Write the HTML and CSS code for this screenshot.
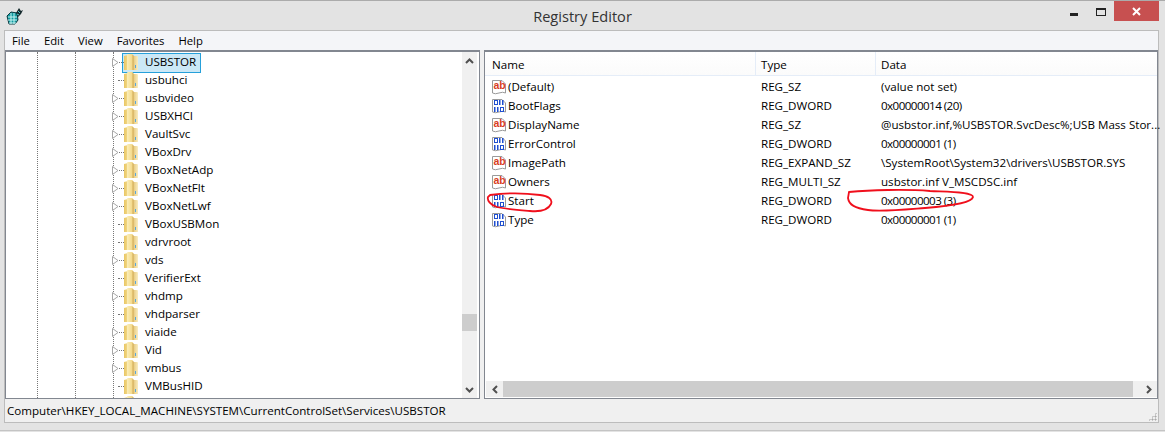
FILE: index.html
```html
<!DOCTYPE html>
<html>
<head>
<meta charset="utf-8">
<title>Registry Editor</title>
<link rel="stylesheet" href="styles.css">
</head>
<body>
<svg width="0" height="0" class="defs">
  <defs>
    <linearGradient id="fl" x1="0" y1="0" x2="1" y2="0">
      <stop offset="0" stop-color="#e9c764"/><stop offset="1" stop-color="#f3d98a"/>
    </linearGradient>
    <linearGradient id="fm" x1="0" y1="0" x2="1" y2="0">
      <stop offset="0" stop-color="#fbeeb8"/><stop offset="1" stop-color="#f2d684"/>
    </linearGradient>
    <linearGradient id="fr" x1="0" y1="0" x2="1" y2="0">
      <stop offset="0" stop-color="#e2be66"/><stop offset="1" stop-color="#f9edc2"/>
    </linearGradient>
  </defs>
  <symbol id="folder" viewBox="0 0 14 16">
    <path d="M0 2 L4 1 L4 16 L0 16 Z" fill="url(#fl)"/>
    <path d="M8 2 H13 Q14 2 14 3 V16 H8 Z" fill="url(#fr)"/>
    <path d="M3 1 Q3 0 4 0 H8 Q9 0 9 1 V16 H3 Z" fill="url(#fm)"/>
    <path d="M9 1 V16" stroke="#d0aa58" stroke-width="1" fill="none"/>
    <rect x="11" y="11" width="1" height="3" fill="#58a6dc"/>
  </symbol>
  <symbol id="twist" viewBox="0 0 7 9">
    <path d="M0.500 0.500 L6 4.500 L0.500 8.500 Z" fill="#fff" stroke="#a6a6a6" stroke-width="1"/>
  </symbol>
  <symbol id="page" viewBox="0 0 16 16">
    <path d="M1.500 1.500 H11 L14.500 5 V14 Q12 12.500 8 14 Q4 15.500 1.500 14 Z" fill="#fff" stroke="#9a9a9a"/>
  </symbol>
  <symbol id="dw" viewBox="0 0 16 16">
    <path d="M1.500 1.500 H11 L14.500 5 V14 Q12 12.500 8 14 Q4 15.500 1.500 14 Z" fill="#fff" stroke="#9a9a9a"/>
    <path d="M3 2 H7 V7 H3 Z M4 3 V6 H6 V3 Z M8 2 H9.500 V7 H8 Z M11 2 H12.500 V7 H11 Z M3 9 H4.500 V14 H3 Z M6 9 H7.500 V14 H6 Z M9 9 H13 V14 H9 Z M10 10 V13 H12 V10 Z" fill="#1f4fd0" fill-rule="evenodd"/>
  </symbol>
</svg>

<div class="window">
  <header class="titlebar">
    <svg class="appicon" width="18" height="18" viewBox="0 0 18 18">
      <path d="M1 9 L5 5 L11 6 L12 13 L9 17 L3 17 Z" fill="#0f9aa0" stroke="#0b3a40" stroke-width="1"/>
      <path d="M2 10 H11 M2 13 H11 M3 16 H10 M5 6 V17 M8 6 V17" stroke="#c8f4f2" stroke-width="1"/>
      <path d="M10 6 L13 1 L15 4 L17 3 L15 7 L12 10 Z" fill="#14292c"/>
      <path d="M12 4 L14 6 M11 7 L13 8" stroke="#57c8c8" stroke-width="1"/>
    </svg>
    <h1 class="title">Registry Editor</h1>
    <div class="controls">
      <span class="min"></span>
      <span class="max"></span>
      <span class="close">
        <svg width="9" height="9" viewBox="0 0 9 9"><path d="M1 1 L8 8 M8 1 L1 8" stroke="#fff" stroke-width="2"/></svg>
      </span>
    </div>
  </header>

  <div class="client">
    <nav class="menubar">
      <span>File</span><span>Edit</span><span>View</span><span>Favorites</span><span>Help</span>
    </nav>

    <main class="panes">
      <section class="tree">
        <div class="tree-body">
          <div class="guide guide-1"></div>
          <div class="guide guide-2"></div>
          <div class="guide guide-3"></div>
          <div class="row selected"><svg class="twist"><use href="#twist"/></svg><span class="stub"></span><svg class="folder"><use href="#folder"/></svg><span class="label">USBSTOR</span></div>
          <div class="row"><span class="twist none"></span><span class="stub long"></span><svg class="folder"><use href="#folder"/></svg><span class="label">usbuhci</span></div>
          <div class="row"><svg class="twist"><use href="#twist"/></svg><span class="stub"></span><svg class="folder"><use href="#folder"/></svg><span class="label">usbvideo</span></div>
          <div class="row"><svg class="twist"><use href="#twist"/></svg><span class="stub"></span><svg class="folder"><use href="#folder"/></svg><span class="label">USBXHCI</span></div>
          <div class="row"><svg class="twist"><use href="#twist"/></svg><span class="stub"></span><svg class="folder"><use href="#folder"/></svg><span class="label">VaultSvc</span></div>
          <div class="row"><svg class="twist"><use href="#twist"/></svg><span class="stub"></span><svg class="folder"><use href="#folder"/></svg><span class="label">VBoxDrv</span></div>
          <div class="row"><svg class="twist"><use href="#twist"/></svg><span class="stub"></span><svg class="folder"><use href="#folder"/></svg><span class="label">VBoxNetAdp</span></div>
          <div class="row"><svg class="twist"><use href="#twist"/></svg><span class="stub"></span><svg class="folder"><use href="#folder"/></svg><span class="label">VBoxNetFlt</span></div>
          <div class="row"><svg class="twist"><use href="#twist"/></svg><span class="stub"></span><svg class="folder"><use href="#folder"/></svg><span class="label">VBoxNetLwf</span></div>
          <div class="row"><span class="twist none"></span><span class="stub long"></span><svg class="folder"><use href="#folder"/></svg><span class="label">VBoxUSBMon</span></div>
          <div class="row"><span class="twist none"></span><span class="stub long"></span><svg class="folder"><use href="#folder"/></svg><span class="label">vdrvroot</span></div>
          <div class="row"><svg class="twist"><use href="#twist"/></svg><span class="stub"></span><svg class="folder"><use href="#folder"/></svg><span class="label">vds</span></div>
          <div class="row"><span class="twist none"></span><span class="stub long"></span><svg class="folder"><use href="#folder"/></svg><span class="label">VerifierExt</span></div>
          <div class="row"><svg class="twist"><use href="#twist"/></svg><span class="stub"></span><svg class="folder"><use href="#folder"/></svg><span class="label">vhdmp</span></div>
          <div class="row"><span class="twist none"></span><span class="stub long"></span><svg class="folder"><use href="#folder"/></svg><span class="label">vhdparser</span></div>
          <div class="row"><svg class="twist"><use href="#twist"/></svg><span class="stub"></span><svg class="folder"><use href="#folder"/></svg><span class="label">viaide</span></div>
          <div class="row"><svg class="twist"><use href="#twist"/></svg><span class="stub"></span><svg class="folder"><use href="#folder"/></svg><span class="label">Vid</span></div>
          <div class="row"><svg class="twist"><use href="#twist"/></svg><span class="stub"></span><svg class="folder"><use href="#folder"/></svg><span class="label">vmbus</span></div>
          <div class="row"><span class="twist none"></span><span class="stub long"></span><svg class="folder"><use href="#folder"/></svg><span class="label">VMBusHID</span></div>
          <div class="row"><span class="twist none"></span><span class="stub long"></span><svg class="folder"><use href="#folder"/></svg></div>
        </div>
        <div class="vscroll">
          <span class="sbtn"><svg width="9" height="6" viewBox="0 0 9 6"><path d="M1 5 L4.500 1.500 L8 5" fill="none" stroke="#505050" stroke-width="2"/></svg></span>
          <span class="vtrack"><span class="vthumb"></span></span>
          <span class="sbtn"><svg width="9" height="6" viewBox="0 0 9 6"><path d="M1 1 L4.500 4.500 L8 1" fill="none" stroke="#505050" stroke-width="2"/></svg></span>
        </div>
      </section>

      <section class="list">
        <div class="list-head">
          <span class="c-name">Name</span><span class="c-type">Type</span><span class="c-data">Data</span>
        </div>
        <div class="list-body">
          <div class="item"><span class="c-name"><svg class="vicon" viewBox="0 0 16 16"><use href="#page"/><text x="2.500" y="10" class="ab">ab</text></svg>(Default)</span><span class="c-type">REG_SZ</span><span class="c-data">(value not set)</span></div>
          <div class="item"><span class="c-name"><svg class="vicon"><use href="#dw"/></svg>BootFlags</span><span class="c-type">REG_DWORD</span><span class="c-data hex">0x00000014 (20)</span></div>
          <div class="item"><span class="c-name"><svg class="vicon" viewBox="0 0 16 16"><use href="#page"/><text x="2.500" y="10" class="ab">ab</text></svg>DisplayName</span><span class="c-type">REG_SZ</span><span class="c-data">@usbstor.inf,%USBSTOR.SvcDesc%;USB Mass Stor...</span></div>
          <div class="item"><span class="c-name"><svg class="vicon"><use href="#dw"/></svg>ErrorControl</span><span class="c-type">REG_DWORD</span><span class="c-data hex">0x00000001 (1)</span></div>
          <div class="item"><span class="c-name"><svg class="vicon" viewBox="0 0 16 16"><use href="#page"/><text x="2.500" y="10" class="ab">ab</text></svg>ImagePath</span><span class="c-type">REG_EXPAND_SZ</span><span class="c-data">\SystemRoot\System32\drivers\USBSTOR.SYS</span></div>
          <div class="item"><span class="c-name"><svg class="vicon" viewBox="0 0 16 16"><use href="#page"/><text x="2.500" y="10" class="ab">ab</text></svg>Owners</span><span class="c-type">REG_MULTI_SZ</span><span class="c-data">usbstor.inf V_MSCDSC.inf</span></div>
          <div class="item"><span class="c-name"><svg class="vicon"><use href="#dw"/></svg>Start</span><span class="c-type">REG_DWORD</span><span class="c-data hex">0x00000003 (3)</span></div>
          <div class="item"><span class="c-name"><svg class="vicon"><use href="#dw"/></svg>Type</span><span class="c-type">REG_DWORD</span><span class="c-data hex">0x00000001 (1)</span></div>
        </div>
        <div class="hscroll">
          <span class="hbtn"><svg width="6" height="9" viewBox="0 0 6 9"><path d="M5 1 L1.500 4.500 L5 8" fill="none" stroke="#505050" stroke-width="2"/></svg></span>
          <span class="hthumb"></span>
          <span class="hrest"></span>
          <span class="hbtn"><svg width="6" height="9" viewBox="0 0 6 9"><path d="M1 1 L4.500 4.500 L1 8" fill="none" stroke="#505050" stroke-width="2"/></svg></span>
        </div>
      </section>
    </main>

    <footer class="status">
      <span>Computer\HKEY_LOCAL_MACHINE\SYSTEM\CurrentControlSet\Services\USBSTOR</span>
      <span class="grip"></span>
    </footer>
  </div>
</div>

<svg class="marks" width="1165" height="432" viewBox="0 0 1165 432">
  <path d="M490 195 C505 193 525 193 540 195 C548 196 553 199 551 204 C548 210 540 212 530 211 C518 210 505 209 497 207 C490 205 487 200 488 197 Z" fill="none" stroke="#f00f1c" stroke-width="1.800"/>
  <path d="M849 192 C870 190 905 189 930 191 C950 192 973 192 973 197 C972 203 950 206 925 208 C900 210 880 212 868 210 C855 208 849 205 848 198 Z" fill="none" stroke="#f00f1c" stroke-width="1.800"/>
</svg>
</body>
</html>
```
FILE: styles.css
```css
* { box-sizing: border-box; }
html, body { margin: 0; padding: 0; }
body {
  width: 1165px;
  height: 432px;
  overflow: hidden;
  position: relative;
  font-family: "Open Sans", "Noto Sans", sans-serif;
  font-size: 11.6px;
  color: #000;
  background: #e3e3e3;
}
.defs { position: absolute; }
.ab { font: bold 10.500px "Liberation Sans", sans-serif; fill: #d8401f; }
.window {
  height: 431px;
  border-top: 1px solid #ababab;
  border-bottom: 1px solid #c4c4c4;
  display: flex;
  flex-direction: column;
}
.titlebar {
  height: 29px;
  display: flex;
  align-items: center;
  position: relative;
  padding-left: 6px;
  flex: none;
}
.appicon { display: block; margin-top: 1px; }
.title {
  position: absolute;
  left: 0;
  right: 0;
  margin: 0;
  text-align: center;
  font-size: 14.6px;
  font-weight: 400;
  color: #333;
}
.controls {
  position: absolute;
  right: 6px;
  top: 0;
  height: 20px;
  display: flex;
}
.min {
  width: 8px;
  height: 3px;
  background: #222;
  margin: 12px 0 0 0;
}
.max {
  width: 10px;
  height: 8px;
  border: 1px solid #222;
  border-top-width: 2px;
  margin: 7px 0 0 18px;
}
.close {
  width: 45px;
  height: 20px;
  background: #c75050;
  margin-left: 8px;
  display: flex;
  align-items: center;
  justify-content: center;
}
.close svg { display: block; }
.client {
  margin: 0 6px 0 4px;
  height: 393px;
  flex: none;
  border: 1px solid #bcbcbc;
  background: #f0f0f0;
  display: flex;
  flex-direction: column;
}
.menubar {
  height: 19px;
  flex: none;
  background: #f4f5f8;
  display: flex;
  padding-left: 7px;
  gap: 14px;
  align-items: center;
  font-size: 11.3px;
}
.panes {
  flex: none;
  height: 349px;
  display: flex;
  gap: 4px;
  background: #f0f0f0;
}
.tree {
  width: 475px;
  border: 1px solid #828790;
  border-top-width: 2px;
  display: flex;
  background: #fff;
  flex: none;
}
.tree-body {
  flex: 1;
  position: relative;
  overflow: hidden;
  padding-top: 1px;
}
.guide {
  position: absolute;
  top: 0;
  bottom: 0;
  border-left: 1px dotted #777;
}
.guide-1 { left: 31px; }
.guide-2 { left: 69px; }
.guide-3 { left: 107px; }
.row {
  height: 18px;
  display: flex;
  align-items: center;
  padding-left: 106px;
  position: relative;
  white-space: nowrap;
}
.twist {
  width: 7px;
  height: 9px;
  flex: none;
  display: block;
}
.twist.none { background: none; }
.stub {
  width: 5px;
  margin-left: 0;
  border-top: 1px dotted #777;
  flex: none;
}
.stub.long { width: 6px; margin-left: -1px; }
.folder { width: 14px; height: 16px; flex: none; display: block; }
.label { margin-left: 7px; margin-bottom: 2px; }
.row.selected::before {
  content: "";
  position: absolute;
  left: 116px;
  top: 0;
  width: 77px;
  height: 18px;
  background: #cbe8f6;
  border: 1px solid #26a0da;
}
.row.selected > * { position: relative; }
.vscroll {
  width: 15px;
  margin-right: 2px;
  flex: none;
  background: #f0f0f0;
  display: flex;
  flex-direction: column;
}
.sbtn {
  height: 17px;
  flex: none;
  display: flex;
  align-items: center;
  justify-content: center;
}
.vtrack {
  flex: 1;
  padding-top: 245px;
}
.vthumb {
  display: block;
  height: 17px;
  background: #cdcdcd;
}
.list {
  width: 674px;
  border: 1px solid #828790;
  border-top-width: 2px;
  background: #fff;
  display: flex;
  flex-direction: column;
  flex: none;
}
.list-head {
  height: 24px;
  flex: none;
  display: flex;
  align-items: center;
  background: linear-gradient(#fff, #fbfbfb);
  border-bottom: 1px solid #e5edf8;
}
.c-name { width: 270px; padding-left: 7px; display: flex; align-items: center; flex: none; }
.c-type { width: 120px; padding-left: 6px; flex: none; }
.c-data { padding-left: 6px; white-space: nowrap; }
.c-data.hex { letter-spacing: -0.55px; }
.list-head .c-type { border-left: 1px solid #e5edf8; padding-left: 5px; }
.list-head .c-data { border-left: 1px solid #e5edf8; padding-left: 5px; }
.list-head span { height: 23px; line-height: 25px; display: block; }
.list-body { flex: 1; padding-top: 1px; }
.item {
  height: 19px;
  display: flex;
  align-items: center;
  white-space: nowrap;
}
.item .c-name { padding-left: 6px; }
.vicon { width: 16px; height: 16px; margin-right: 1px; flex: none; display: block; }
.hscroll {
  height: 16px;
  margin: 0 0 1px 1px;
  flex: none;
  background: #f0f0f0;
  display: flex;
}
.hbtn {
  width: 17px;
  flex: none;
  display: flex;
  align-items: center;
  justify-content: center;
}
.hthumb { flex: 1; background: #cdcdcd; }
.hrest { width: 7px; flex: none; }
.status {
  flex: 1;
  display: flex;
  align-items: center;
  padding-left: 2px;
  position: relative;
  background: #f0f0f0;
}
.grip {
  position: absolute;
  right: 1px;
  bottom: 1px;
  width: 9px;
  height: 9px;
  background-image: radial-gradient(#a8a8a8 45%, transparent 50%);
  background-size: 3px 3px;
  clip-path: polygon(100% 0, 100% 100%, 0 100%);
}
.marks { position: absolute; left: 0; top: 0; pointer-events: none; }
```
